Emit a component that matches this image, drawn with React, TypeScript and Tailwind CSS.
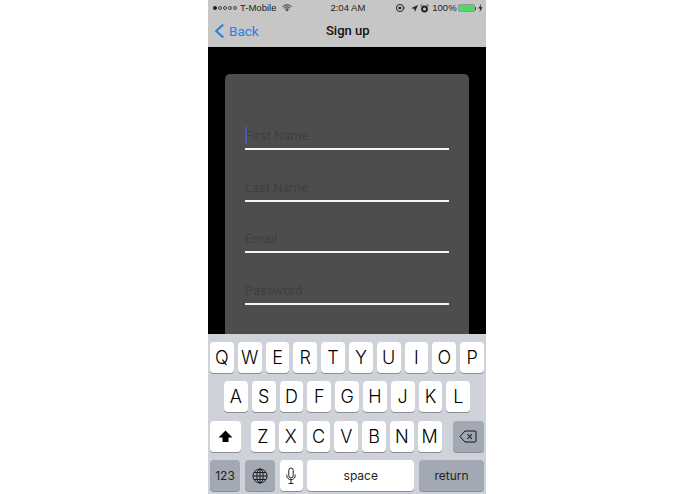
import React from "react";

const Key = ({ c }: { c: string }) => (
  <div className="w-[23.8px] h-[31px] bg-white rounded-[4px] shadow-[0_1px_0_#8a8d93] flex items-center justify-center text-[18px] font-light text-black">{c}</div>
);
const Field = ({ label, caret }: { label: string; caret?: boolean }) => (
  <div className="relative h-[26px] border-b-2 border-[#f4f4f4] text-[13px] leading-[23px] text-[#3f3f3f] mb-[25.7px] font-['Roboto',sans-serif]">
    {caret && <div className="absolute left-0 top-[3px] w-[2px] h-[17px] bg-[#3f5fb0]" />}
    {label}
  </div>
);

export default function App() {
  return (
    <div className="w-[695px] h-[494px] bg-white overflow-hidden font-['Liberation_Sans',sans-serif]">
      <div className="ml-[208px] w-[278px] h-[494px] flex flex-col">
        <div className="h-[47px] bg-[#c6c6c6] shrink-0">
          <div className="h-[15px] flex items-center text-[9.5px] text-[#222] pt-[1px] whitespace-nowrap">
            <div className="flex items-center gap-[1px] ml-[5px] shrink-0">
              <span className="w-[4px] h-[4px] rounded-full bg-[#222]" />
              {[0, 1, 2, 3].map((i) => (
                <span key={i} className="w-[4px] h-[4px] rounded-full border-[0.5px] border-[#444]" />
              ))}
            </div>
            <span className="ml-[3px]">T-Mobile</span>
            <svg className="ml-[6px] shrink-0" width="10" height="8" viewBox="0 0 11 8">
              <path d="M0.5 2.6 A7 7 0 0 1 10.5 2.6 M2 4.2 A5 5 0 0 1 9 4.2 M3.5 5.7 A3 3 0 0 1 7.5 5.7" stroke="#222" strokeWidth="1" fill="none" />
              <path d="M4.4 6.6 L5.5 5.6 L6.6 6.6 L5.5 7.8 Z" fill="#222" />
            </svg>
            <span className="ml-[38px]">2:04 AM</span>
            <svg className="ml-[30px] shrink-0" width="10" height="10" viewBox="0 0 10 10">
              <circle cx="5" cy="5" r="3.6" stroke="#222" strokeWidth="1" fill="none" />
              <rect x="3.6" y="3.8" width="2.6" height="2.4" fill="#222" />
              <path d="M8 4.5 L10 4.5 L9 6 Z" fill="#222" />
            </svg>
            <svg className="ml-[6px] shrink-0" width="7" height="7" viewBox="0 0 8 8">
              <path d="M8 0 L0 3.6 L3.8 4.2 L4.4 8 Z" fill="#222" />
            </svg>
            <svg className="ml-[2px] shrink-0" width="9" height="9" viewBox="0 0 9 9">
              <circle cx="4.5" cy="5" r="3.4" fill="#222" />
              <circle cx="4.5" cy="5" r="1.5" fill="#c6c6c6" />
              <path d="M0.5 2 L2.2 0.6 M8.5 2 L6.8 0.6" stroke="#222" strokeWidth="1" />
            </svg>
            <span className="ml-[3px]">100%</span>
            <div className="ml-[1px] w-[17px] h-[8px] bg-[#4cd964] rounded-[1px] border-[0.5px] border-[#999] shrink-0" />
            <div className="w-[1px] h-[3px] bg-[#444] shrink-0" />
            <svg className="ml-[2px] shrink-0" width="5" height="8" viewBox="0 0 5 8">
              <path d="M3.2 0 L0.4 4.5 L2.2 4.5 L1.6 8 L4.6 3.2 L2.7 3.2 Z" fill="#222" />
            </svg>
          </div>
          <div className="h-[32px] flex items-center font-['Roboto',sans-serif] text-[13.5px]">
            <svg className="ml-[6px] shrink-0" width="11" height="16" viewBox="0 0 11 17">
              <path d="M9.5 1.5 L2 8.5 L9.5 15.5" stroke="#2a7fe0" strokeWidth="2.2" fill="none" />
            </svg>
            <span className="ml-[4px] text-[#2a7fe0] w-[28px]">Back</span>
            <span className="ml-[69px] font-medium text-[#111] text-[13px]">Sign up</span>
          </div>
        </div>
        <div className="h-[287px] bg-black shrink-0 pt-[27px] px-[17px]">
          <div className="w-[244px] h-[260px] bg-[#4d4d4d] rounded-t-[5px] pt-[50px] px-[20px]">
            <Field label="First Name" caret />
            <Field label="Last Name" />
            <Field label="Email" />
            <Field label="Password" />
          </div>
        </div>
        <div className="h-[160px] bg-[#cfd2d8] shrink-0 pt-[8px] font-['Inter',sans-serif]">
          <div className="flex gap-[4px] pl-[2px]">
            {"QWERTYUIOP".split("").map((c) => <Key key={c} c={c} />)}
          </div>
          <div className="flex gap-[4px] pl-[16px] mt-[8px]">
            {"ASDFGHJKL".split("").map((c) => <Key key={c} c={c} />)}
          </div>
          <div className="flex mt-[9px] pl-[2px]">
            <div className="w-[31px] h-[31px] bg-white rounded-[4px] shadow-[0_1px_0_#8a8d93] flex items-center justify-center">
              <svg width="15" height="13" viewBox="0 0 15 13"><path d="M7.5 0.5 L14.5 7.5 L10.5 7.5 L10.5 12 L4.5 12 L4.5 7.5 L0.5 7.5 Z" fill="#000" /></svg>
            </div>
            <div className="flex gap-[4px] ml-[10px]">
              {"ZXCVBNM".split("").map((c) => <Key key={c} c={c} />)}
            </div>
            <div className="w-[31px] h-[31px] ml-[11px] bg-[#a3a9b4] rounded-[4px] shadow-[0_1px_0_#8a8d93] flex items-center justify-center">
              <svg width="18" height="13" viewBox="0 0 18 13">
                <path d="M6 1 L16 1 Q17 1 17 2 L17 11 Q17 12 16 12 L6 12 L1 6.5 Z" stroke="#111" strokeWidth="1" fill="none" />
                <path d="M8.5 4 L13 9 M13 4 L8.5 9" stroke="#111" strokeWidth="1.1" />
              </svg>
            </div>
          </div>
          <div className="flex mt-[8px] pl-[2px] gap-[4.75px]">
            <div className="w-[30px] h-[31px] bg-[#a3a9b4] rounded-[4px] shadow-[0_1px_0_#8a8d93] flex items-center justify-center text-[12px] text-[#222]">123</div>
            <div className="w-[30px] h-[31px] bg-[#a3a9b4] rounded-[4px] shadow-[0_1px_0_#8a8d93] flex items-center justify-center">
              <svg width="16" height="16" viewBox="0 0 16 16" fill="none" stroke="#111" strokeWidth="0.9">
                <circle cx="8" cy="8" r="7" />
                <ellipse cx="8" cy="8" rx="3.2" ry="7" />
                <path d="M8 1 V15 M1 8 H15 M2 4.5 H14 M2 11.5 H14" />
              </svg>
            </div>
            <div className="w-[23px] h-[31px] bg-white rounded-[4px] shadow-[0_1px_0_#8a8d93] flex items-center justify-center">
              <svg width="10" height="18" viewBox="0 0 10 18" fill="none" stroke="#222" strokeWidth="1">
                <rect x="2.8" y="1" width="4.4" height="10" rx="2.2" />
                <path d="M0.8 7.5 V8.5 A4.2 4.2 0 0 0 9.2 8.5 V7.5 M5 12.7 V16 M2.5 16.5 H7.5" />
              </svg>
            </div>
            <div className="w-[107px] h-[31px] bg-white rounded-[4px] shadow-[0_1px_0_#8a8d93] flex items-center justify-center text-[12px] text-[#222]">space</div>
            <div className="w-[65px] h-[31px] bg-[#a3a9b4] rounded-[4px] shadow-[0_1px_0_#8a8d93] flex items-center justify-center text-[12px] text-[#222]">return</div>
          </div>
        </div>
      </div>
    </div>
  );
}
